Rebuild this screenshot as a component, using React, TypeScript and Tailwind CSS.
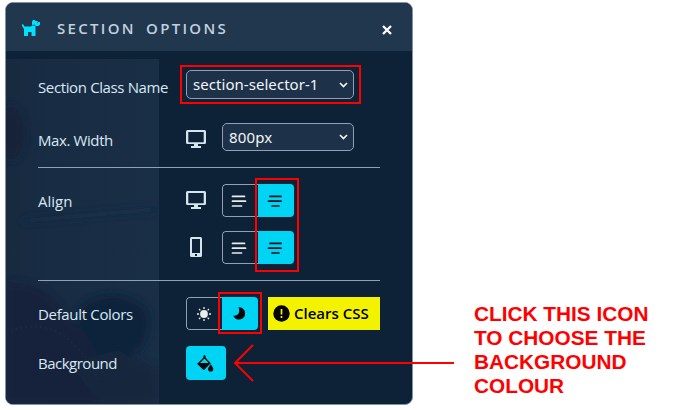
import type { ReactNode } from "react";

const label = "block whitespace-nowrap font-['Open_Sans','Noto_Sans',sans-serif] text-[15px] leading-5 text-[#d8e8f3]";

function Monitor() {
  return (
    <svg width="20" height="18" viewBox="0 0 20 18" className="shrink-0">
      <path fillRule="evenodd" fill="#d3e5ef" d="M1.500 0h17Q20 0 20 1.500v11Q20 14 18.500 14H12v2h3v2H5v-2h3v-2H1.500Q0 14 0 12.500v-11Q0 0 1.500 0ZM2.300 2v10.300h15.400V2Z" />
    </svg>
  );
}

function Phone() {
  return (
    <svg width="12" height="20" viewBox="0 0 12 20" className="shrink-0">
      <path fillRule="evenodd" fill="#d3e5ef" d="M1.500 0h9Q12 0 12 1.500v17Q12 20 10.500 20h-9Q0 20 0 18.500v-17Q0 0 1.500 0ZM2 2v14h8V2ZM5 17v2h2v-2Z" />
    </svg>
  );
}

function Dog() {
  return (
    <svg width="19" height="16" viewBox="0 0 19 16" className="mt-px shrink-0">
      <path fill="#00e1ff" d="M0 4.500 1 4 2.500 6.500H9L10 5.500V1.500L11 0h1.500L14 1h1.500l.5 1h2v2.500L16.500 6H13.500v10H9.500V12H6V16H2V9L0 6Z" />
      <path fill="#176080" d="M10.500 4.800h3L13 6h-2.500ZM15 2h1v1h-1Z" />
    </svg>
  );
}

function Lines({ centered, color }: { centered?: boolean; color: string }) {
  return (
    <svg width="16" height="14" viewBox="0 0 16 14">
      <path stroke={color} strokeWidth="1.700" strokeLinecap="round" d={centered ? "M3 2.400h11M1.500 7.200h12.500M5 12h7" : "M1.500 2.400h12M1.500 7.200h13M1.500 12h9"} />
    </svg>
  );
}

function Select({ children, className }: { children: ReactNode; className: string }) {
  return (
    <div className={`flex items-center justify-between rounded-[5px] border border-[#91a0b4] bg-[#1d3149] pr-[5px] pl-1.5 font-['Noto_Sans','Open_Sans',sans-serif] text-[15px] text-[#f2f5f7] ${className}`}>
      <span className="whitespace-nowrap">{children}</span>
      <svg width="9" height="6" viewBox="0 0 9 6" fill="none">
        <path d="m1 1 3.500 3.500L8 1" stroke="#f2f5f7" strokeWidth="1.700" />
      </svg>
    </div>
  );
}

function AlignGroup() {
  return (
    <div className="flex h-[33px] w-[72px] overflow-hidden rounded-[4px]">
      <div className="flex w-9 items-center justify-center rounded-l-[4px] border border-r-0 border-[#91a0b4] pr-1"><Lines color="#e9edf0" /></div>
      <div className="flex w-9 items-center justify-center bg-[#00d4f4] pr-[3px]"><Lines centered color="#03151d" /></div>
    </div>
  );
}

function SunIcon() {
  return (
    <svg width="14" height="14" viewBox="0 0 14 14" className="shrink-0">
      <circle cx="7" cy="7" r="3.900" fill="#e9edf0" />
      <path d="M7 0v2M7 12v2M0 7h2M12 7h2M2 2l1.400 1.400M10.600 10.600 12 12M2 12l1.400-1.400M10.600 3.400 12 2" stroke="#e9edf0" strokeWidth="1.300" />
    </svg>
  );
}

function MoonIcon() {
  return (
    <svg width="12" height="13" viewBox="0 0 12 13" className="shrink-0">
      <path d="M5.500.2A6.200 6.200 0 1 1 .2 8.600C4.500 9.800 7.800 5.500 5.500.2Z" fill="#050809" />
    </svg>
  );
}

function Bucket() {
  return (
    <svg width="17" height="17" viewBox="0 0 17 17" className="shrink-0">
      <path fill="none" stroke="#050809" strokeWidth="1.300" d="M7.500 0v3.500M7.500 2.500 1.300 8.700 6.800 14l6-5.800-5.300-5.700Z" />
      <path fill="#050809" d="M.7 8h12.400l-6 6.700h-.8L.4 9ZM13.700 9c.6 1.500 2.600 3.600 2.600 5a2.600 2.600 0 0 1-5.200 0c0-1.400 2-3.500 2.600-5ZM6.500 1h2v3h-2Z" />
    </svg>
  );
}

function Backdrop() {
  return (
    <svg className="absolute top-[56px] left-0" width="153" height="346" viewBox="0 0 153 346">
      <defs>
        <linearGradient id="side" x1="0" y1="0" x2="1" y2="0">
          <stop offset="0" stopColor="#172a40" />
          <stop offset="0.300" stopColor="#182c43" />
          <stop offset="1" stopColor="#192f46" />
        </linearGradient>
        <filter id="soft" x="-50%" y="-50%" width="200%" height="200%"><feGaussianBlur stdDeviation="4" /></filter>
      </defs>
      <rect width="153" height="346" fill="url(#side)" />
      <g filter="url(#soft)">
        <ellipse cx="5" cy="74" rx="13" ry="28" fill="#122339" />
        <path d="M16 162 153 150" stroke="#162b42" strokeWidth="3" />
        <path d="M72 250Q105 222 141 250Q150 285 119 301L77 310Z" fill="#0e243a" />
        <path d="M0 224Q40 220 62 258Q102 290 100 346H0Z" fill="#14233b" />
        <path d="M64 305 112 291 153 310V346H96Z" fill="#13283e" />
      </g>
      <path d="M0 274Q35 258 63 281Q96 310 97 346" fill="none" stroke="#182940" strokeWidth="2" strokeDasharray="2 3" />
    </svg>
  );
}

export default function App() {
  return (
    <main className="relative flex h-[410px] w-[700px] overflow-hidden bg-white pt-[2px] pl-[5px]">
      <section className="relative h-[403px] w-[408px] shrink-0 overflow-hidden rounded-[8px] border border-[#8292aa] bg-[#0d2236]">
        <Backdrop />
        <header className="relative flex h-12 items-center bg-[#21374e] pr-5 pl-4">
          <Dog />
          <h1 className="ml-4 whitespace-nowrap pt-[3px] font-['Open_Sans','Noto_Sans',sans-serif] text-[15px] font-semibold tracking-[2.300px] text-[#c2d0df] [word-spacing:4px]">SECTION OPTIONS</h1>
          <svg width="10" height="10" viewBox="0 0 10 10" className="mt-[6px] ml-auto"><path d="m1 1 8 8M9 1 1 9" stroke="#fff" strokeWidth="2.300" /></svg>
        </header>

        <div className="relative flex w-[374px] flex-col pl-8">
          <div className="mt-[19px] flex h-[29px] items-center">
            <div className="w-[148px] pt-[4px]"><span className={`${label} tracking-[-0.370px]`}>Section Class Name</span></div>
            <Select className="h-[29px] w-[168px] tracking-[0.050px]">section-selector-1</Select>
          </div>
          <div className="mt-6 flex h-7 items-center">
            <div className="w-[148px] pt-[5px]"><span className={`${label} tracking-[-0.400px]`}>Max. Width</span></div>
            <div className="w-9 pt-1"><Monitor /></div>
            <Select className="h-7 w-[132px] tracking-[0.150px]">800px</Select>
          </div>
          <hr className="mt-4 border-t border-[#91a0b4]" />

          <div className="mt-4 flex h-[33px] items-center">
            <div className="w-[148px] pt-px"><span className={label}>Align</span></div>
            <div className="w-9 pb-px"><Monitor /></div>
            <AlignGroup />
          </div>
          <div className="mt-[14px] flex h-[33px] items-center pl-[148px]">
            <div className="w-9 pb-px pl-1"><Phone /></div>
            <AlignGroup />
          </div>
          <hr className="mt-4 border-t border-[#91a0b4]" />

          <div className="mt-4 flex h-[33px] items-center">
            <div className="w-[148px] pt-px"><span className={`${label} tracking-[-0.330px]`}>Default Colors</span></div>
            <div className="flex h-[33px] w-[72px] overflow-hidden rounded-[4px]">
              <div className="flex w-9 items-center justify-center rounded-l-[4px] border border-r-0 border-[#91a0b4] pr-[2px]"><SunIcon /></div>
              <div className="flex w-9 items-center justify-center bg-[#00d4f4] pr-[2px]"><MoonIcon /></div>
            </div>
            <div className="ml-[10px] flex h-[33px] w-[112px] items-center bg-[#f3f300] pl-[5px]">
              <svg width="17" height="17" viewBox="0 0 17 17" className="mb-px shrink-0"><circle cx="8.500" cy="8.500" r="8.200" fill="#050500" /><path d="M8.500 4v5.500M8.500 11v2" stroke="#f3f300" strokeWidth="1.700" /></svg>
              <span className="ml-[4px] whitespace-nowrap font-['Open_Sans','Noto_Sans',sans-serif] text-[15px] font-semibold text-black">Clears CSS</span>
            </div>
          </div>
          <div className="mt-4 flex h-[34px] items-center">
            <div className="w-[148px]"><span className={`${label} tracking-[-0.500px]`}>Background</span></div>
            <div className="flex h-[34px] w-10 items-center justify-center rounded-[4px] bg-[#00d4f4] pr-px"><Bucket /></div>
          </div>
        </div>
      </section>

      <p className="mt-[300px] ml-[61px] w-[200px] whitespace-pre-line font-['Liberation_Sans',Arial,sans-serif] text-[20.800px] leading-6 font-bold text-[#ff0000]">{"CLICK THIS ICON\nTO CHOOSE THE\nBACKGROUND\nCOLOUR"}</p>

      <div className="absolute top-[65px] left-[180px] h-[39px] w-[181px] border-2 border-[#ff0000]" />
      <div className="absolute top-[178px] left-[255px] h-[94px] w-[44px] border-2 border-[#ff0000]" />
      <div className="absolute top-[292px] left-[218px] h-[42px] w-[44px] border-2 border-[#ff0000]" />
      <svg className="absolute top-[343px] left-[233px]" width="222" height="40" viewBox="0 0 222 40" fill="none">
        <path d="M2 20h219M20 2 2 20l18 18" stroke="#ff0000" strokeWidth="2" />
      </svg>
    </main>
  );
}
